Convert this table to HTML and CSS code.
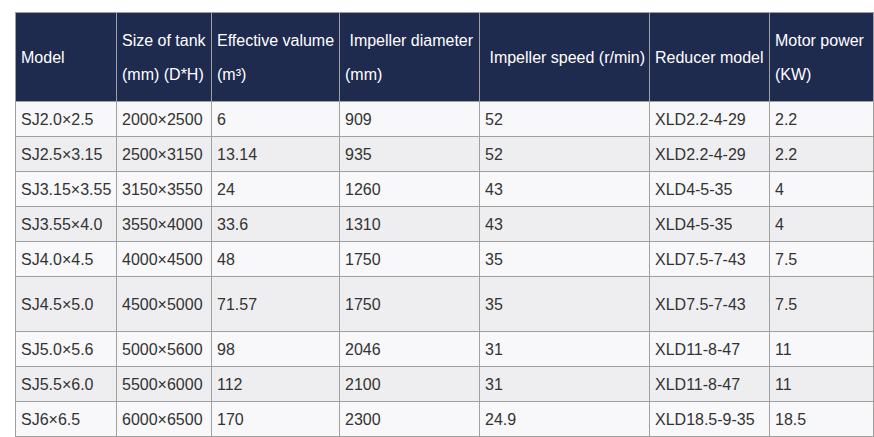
FILE: index.html
```html
<!DOCTYPE html>
<html>
<head>
<meta charset="utf-8">
<link rel="stylesheet" href="styles.css">
</head>
<body>
<div class="wrap">
<table class="spec">
<colgroup>
<col class="c1"><col class="c2"><col class="c3"><col class="c4"><col class="c5"><col class="c6"><col class="c7">
</colgroup>
<thead>
<tr>
<th>Model</th>
<th>Size of tank<br>(mm) (D*H)</th>
<th>Effective valume<br>(m³)</th>
<th>&nbsp;Impeller diameter<br>(mm)</th>
<th>&nbsp;Impeller speed (r/min)</th>
<th>Reducer model</th>
<th>Motor power<br>(KW)</th>
</tr>
</thead>
<tbody>
<tr><td>SJ2.0×2.5</td><td>2000×2500</td><td>6</td><td>909</td><td>52</td><td>XLD2.2-4-29</td><td>2.2</td></tr>
<tr><td>SJ2.5×3.15</td><td>2500×3150</td><td>13.14</td><td>935</td><td>52</td><td>XLD2.2-4-29</td><td>2.2</td></tr>
<tr><td>SJ3.15×3.55</td><td>3150×3550</td><td>24</td><td>1260</td><td>43</td><td>XLD4-5-35</td><td>4</td></tr>
<tr><td>SJ3.55×4.0</td><td>3550×4000</td><td>33.6</td><td>1310</td><td>43</td><td>XLD4-5-35</td><td>4</td></tr>
<tr><td>SJ4.0×4.5</td><td>4000×4500</td><td>48</td><td>1750</td><td>35</td><td>XLD7.5-7-43</td><td>7.5</td></tr>
<tr class="tall"><td>SJ4.5×5.0</td><td>4500×5000</td><td>71.57</td><td>1750</td><td>35</td><td>XLD7.5-7-43</td><td>7.5</td></tr>
<tr><td>SJ5.0×5.6</td><td>5000×5600</td><td>98</td><td>2046</td><td>31</td><td>XLD11-8-47</td><td>11</td></tr>
<tr><td>SJ5.5×6.0</td><td>5500×6000</td><td>112</td><td>2100</td><td>31</td><td>XLD11-8-47</td><td>11</td></tr>
<tr><td>SJ6×6.5</td><td>6000×6500</td><td>170</td><td>2300</td><td>24.9</td><td>XLD18.5-9-35</td><td>18.5</td></tr>
</tbody>
</table>
</div>
</body>
</html>
```

FILE: styles.css
```css
html, body {
  margin: 0;
  padding: 0;
  background: #ffffff;
}
.wrap {
  padding: 12px 0 0 15px;
}
.spec {
  border-collapse: collapse;
  table-layout: fixed;
  width: 858px;
  font-family: "Liberation Sans", Arial, sans-serif;
  font-size: 16px;
  color: #333333;
}
.c1 { width: 101px; }
.c2 { width: 95px; }
.c3 { width: 128px; }
.c4 { width: 140px; }
.c5 { width: 170px; }
.c6 { width: 120px; }
.c7 { width: 104px; }
.spec th, .spec td {
  border: 1px solid #a0a0a0;
  text-align: left;
  vertical-align: middle;
  white-space: nowrap;
  overflow: hidden;
}
.spec th {
  background: #1f2a4f;
  color: #ffffff;
  font-weight: normal;
  line-height: 34px;
  padding: 11px 5px 9px 5px;
  height: 68px;
}
.spec td {
  line-height: 24px;
  padding: 6px 5px 4px 5px;
  height: 24px;
}
.spec tbody tr:nth-child(odd) td {
  background: #f8f8fa;
}
.spec tbody tr:nth-child(even) td {
  background: #eeeef0;
}
.spec tbody tr.tall td {
  height: 44px;
}
```
